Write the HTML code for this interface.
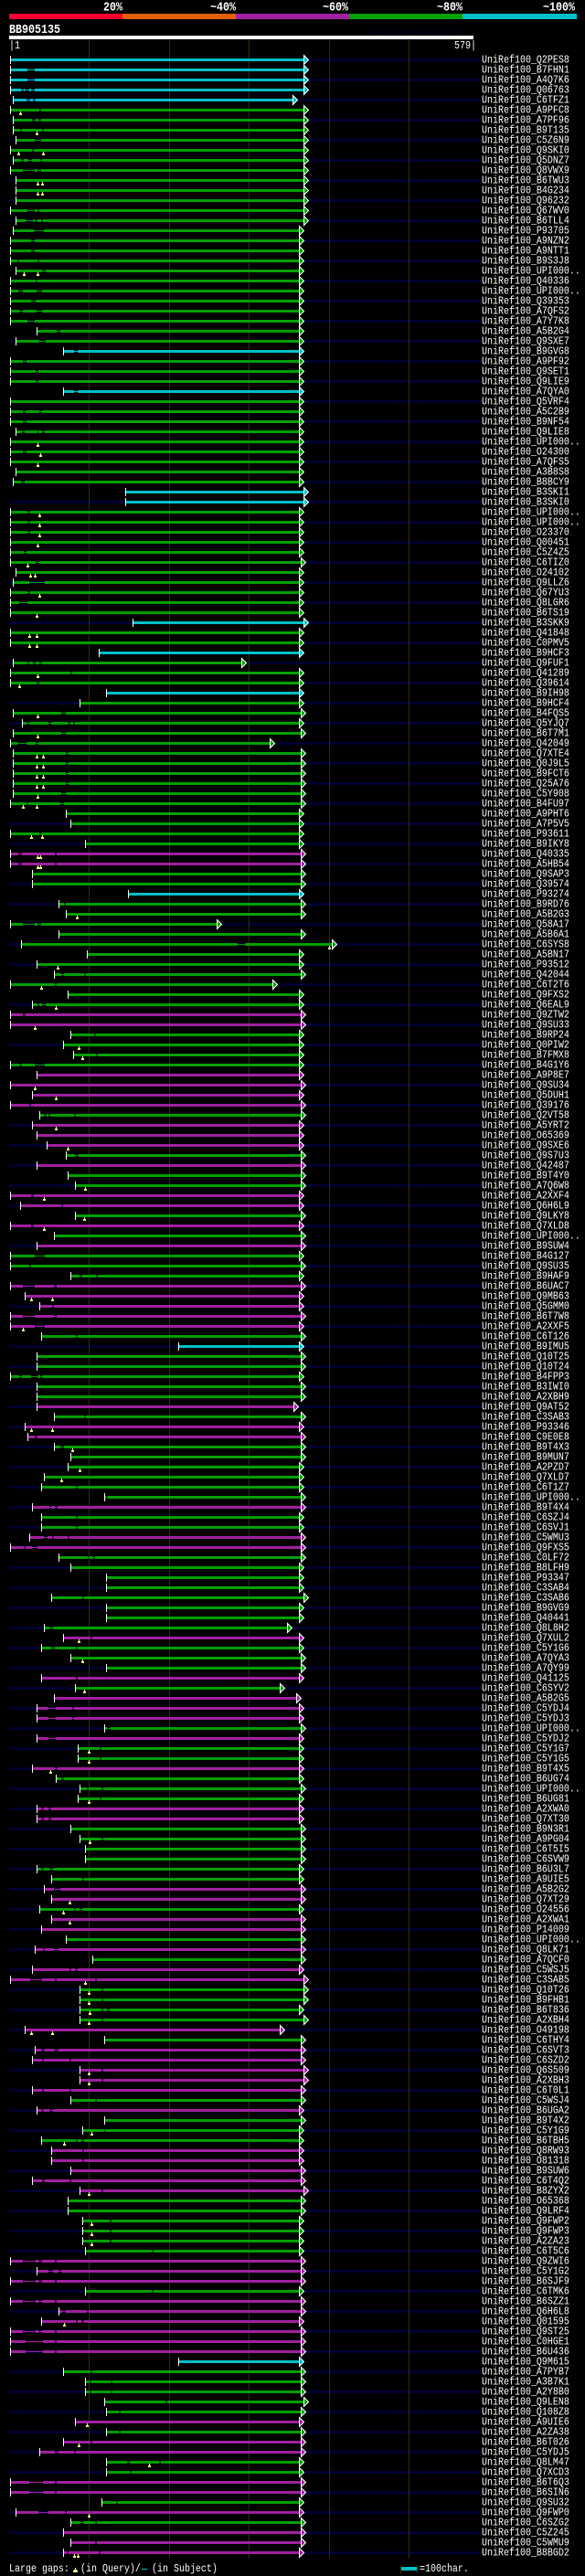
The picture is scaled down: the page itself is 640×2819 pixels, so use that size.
<!DOCTYPE html>
<html><head><meta charset="utf-8"><title>AlignView</title>
<style>
html,body{margin:0;padding:0;background:#000}
svg{display:block;shape-rendering:crispEdges;font-family:"Liberation Mono",monospace}
text{fill:#fff;font-size:12px}
.c{color:#00c0c8}.g{color:#00a000}.m{color:#a020a0}
.c path,.g path,.m path{stroke:currentColor;stroke-width:3;fill:none}
.c path.t,.g path.t,.m path.t{stroke-width:1}
.c text,.g text,.m text{transform:translate(527px,3px) scale(.8333,1)}
.h text{font-size:14px;font-weight:bold}
</style></head><body>
<svg xmlns="http://www.w3.org/2000/svg" width="640" height="2819" viewBox="0 0 640 2819">
<defs>
<pattern id="dk" x="0" y="64" width="640" height="22" patternUnits="userSpaceOnUse"><rect width="640" height="3" fill="#000030"/></pattern>
<rect id="s" x="0" y="-4.5" width="1" height="9" fill="#fff"/>
<path id="a" d="M.5-5L5.5 0 .5 5Z" fill="currentColor" stroke="#fff" stroke-width="1"/>
<g id="y" fill="#ffff80"><rect x="0" y="1.5" width="1" height="2"/><rect x="-1" y="3.5" width="3" height="2"/></g>
</defs>
<rect width="640" height="2819" fill="#000"/>
<g class="h" transform="scale(.8333 1)">
<text x="135.6" y="11.5">20%</text><text x="276" y="11.5">~40%</text><text x="423.6" y="11.5">~60%</text><text x="573.6" y="11.5">~80%</text><text x="712.8" y="11.5">~100%</text>
<text x="12" y="36">BB905135</text>
</g>
<rect x="10" y="15" width="124" height="6" fill="#ff0030"/>
<rect x="134" y="15" width="124" height="6" fill="#e06000"/>
<rect x="258" y="15" width="124" height="6" fill="#a020a0"/>
<rect x="382" y="15" width="124" height="6" fill="#00a000"/>
<rect x="506" y="15" width="125" height="6" fill="#00c0c8"/>
<text x="402" y="37.5" style="font-size:8.33px;fill:#000030">AlignView.pm Beta rel.7</text>
<rect x="10" y="39" width="508" height="4" fill="#fff"/>
<g transform="scale(.8333 1)"><text x="12" y="53">|1</text><text x="596.4" y="53">579|</text></g>
<rect x="10" y="64" width="517" height="2733" fill="url(#dk)"/>
<path d="M97.5 44V2800M185.5 44V2800M272.5 44V2800M360.5 44V2800M447.5 44V2800" stroke="#303000" stroke-width="1"/>

<g class="c" transform="translate(0 65.5)"><path d="M11 0H332"/><use href="#s" x="11"/><use href="#a" x="332"/><text>UniRef100_Q2PES8</text></g>
<g class="c" transform="translate(0 76.5)"><path class="t" d="M11 0H332"/><path d="M11 0H30M38 0H332"/><use href="#s" x="11"/><use href="#a" x="332"/><text>UniRef100_B7FHN1</text></g>
<g class="c" transform="translate(0 87.5)"><path class="t" d="M11 0H332"/><path d="M11 0H30M38 0H332"/><use href="#s" x="11"/><use href="#a" x="332"/><text>UniRef100_A4Q7K6</text></g>
<g class="c" transform="translate(0 98.5)"><path class="t" d="M11 0H332"/><path d="M11 0H23M26 0H27M32 0H34M38 0H332"/><use href="#s" x="11"/><use href="#a" x="332"/><text>UniRef100_Q06763</text></g>
<g class="c" transform="translate(0 109.5)"><path class="t" d="M14 0H320"/><path d="M14 0H29M33 0H36M39 0H320"/><use href="#s" x="14"/><use href="#a" x="320"/><text>UniRef100_C6TFZ1</text></g>
<g class="g" transform="translate(0 120.5)"><path class="t" d="M11 0H332"/><path d="M11 0H43M45 0H332"/><use href="#s" x="11"/><use href="#a" x="332"/><use href="#y" x="22"/><text>UniRef100_A9PFC8</text></g>
<g class="g" transform="translate(0 131.5)"><path class="t" d="M14 0H332"/><path d="M14 0H35M39 0H42M45 0H332"/><use href="#s" x="14"/><use href="#a" x="332"/><text>UniRef100_A7PF96</text></g>
<g class="g" transform="translate(0 142.5)"><path class="t" d="M14 0H332"/><path d="M14 0H22M24 0H46M48 0H332"/><use href="#s" x="14"/><use href="#a" x="332"/><use href="#y" x="40"/><text>UniRef100_B9T135</text></g>
<g class="g" transform="translate(0 153.5)"><path class="t" d="M17 0H332"/><path d="M17 0H38M45 0H332"/><use href="#s" x="17"/><use href="#a" x="332"/><text>UniRef100_C5Z6N9</text></g>
<g class="g" transform="translate(0 164.5)"><path class="t" d="M11 0H332"/><path d="M11 0H35M37 0H332"/><use href="#s" x="11"/><use href="#a" x="332"/><use href="#y" x="20"/><use href="#y" x="47"/><text>UniRef100_Q9SKI0</text></g>
<g class="g" transform="translate(0 175.5)"><path class="t" d="M14 0H332"/><path d="M14 0H23M26 0H31M35 0H44M46 0H332"/><use href="#s" x="14"/><use href="#a" x="332"/><text>UniRef100_Q5DNZ7</text></g>
<g class="g" transform="translate(0 186.5)"><path class="t" d="M11 0H332"/><path d="M11 0H25M38 0H41M45 0H332"/><use href="#s" x="11"/><use href="#a" x="332"/><text>UniRef100_Q8VWX9</text></g>
<g class="g" transform="translate(0 197.5)"><path d="M17 0H332"/><use href="#s" x="17"/><use href="#a" x="332"/><use href="#y" x="41"/><use href="#y" x="46"/><text>UniRef100_B6TWU3</text></g>
<g class="g" transform="translate(0 208.5)"><path d="M17 0H332"/><use href="#s" x="17"/><use href="#a" x="332"/><use href="#y" x="41"/><use href="#y" x="46"/><text>UniRef100_B4G234</text></g>
<g class="g" transform="translate(0 219.5)"><path d="M17 0H332"/><use href="#s" x="17"/><use href="#a" x="332"/><text>UniRef100_Q96232</text></g>
<g class="g" transform="translate(0 230.5)"><path class="t" d="M11 0H332"/><path d="M11 0H30M38 0H41M43 0H332"/><use href="#s" x="11"/><use href="#a" x="332"/><text>UniRef100_Q67WV0</text></g>
<g class="g" transform="translate(0 241.5)"><path class="t" d="M17 0H332"/><path d="M17 0H28M36 0H38M41 0H45M47 0H332"/><use href="#s" x="17"/><use href="#a" x="332"/><text>UniRef100_B6TLL4</text></g>
<g class="g" transform="translate(0 252.5)"><path class="t" d="M14 0H327"/><path d="M14 0H37M48 0H327"/><use href="#s" x="14"/><use href="#a" x="327"/><text>UniRef100_P93705</text></g>
<g class="g" transform="translate(0 263.5)"><path class="t" d="M11 0H327"/><path d="M11 0H34M38 0H327"/><use href="#s" x="11"/><use href="#a" x="327"/><text>UniRef100_A9NZN2</text></g>
<g class="g" transform="translate(0 274.5)"><path class="t" d="M11 0H327"/><path d="M11 0H34M38 0H327"/><use href="#s" x="11"/><use href="#a" x="327"/><text>UniRef100_A9NTT1</text></g>
<g class="g" transform="translate(0 285.5)"><path class="t" d="M11 0H327"/><path d="M11 0H19M21 0H41M43 0H327"/><use href="#s" x="11"/><use href="#a" x="327"/><text>UniRef100_B9S3J8</text></g>
<g class="g" transform="translate(0 296.5)"><path class="t" d="M17 0H327"/><path d="M17 0H46M50 0H327"/><use href="#s" x="17"/><use href="#a" x="327"/><use href="#y" x="26"/><use href="#y" x="41"/><text>UniRef100_UPI000..</text></g>
<g class="g" transform="translate(0 307.5)"><path class="t" d="M11 0H327"/><path d="M11 0H39M41 0H327"/><use href="#s" x="11"/><use href="#a" x="327"/><text>UniRef100_Q40336</text></g>
<g class="g" transform="translate(0 318.5)"><path class="t" d="M11 0H327"/><path d="M11 0H20M25 0H40M46 0H327"/><use href="#s" x="11"/><use href="#a" x="327"/><text>UniRef100_UPI000..</text></g>
<g class="g" transform="translate(0 329.5)"><path class="t" d="M11 0H327"/><path d="M11 0H34M39 0H327"/><use href="#s" x="11"/><use href="#a" x="327"/><text>UniRef100_Q39353</text></g>
<g class="g" transform="translate(0 340.5)"><path class="t" d="M11 0H327"/><path d="M11 0H21M25 0H40M46 0H327"/><use href="#s" x="11"/><use href="#a" x="327"/><text>UniRef100_A7QFS2</text></g>
<g class="g" transform="translate(0 351.5)"><path class="t" d="M11 0H327"/><path d="M11 0H30M38 0H327"/><use href="#s" x="11"/><use href="#a" x="327"/><text>UniRef100_A7Y7K8</text></g>
<g class="g" transform="translate(0 362.5)"><path class="t" d="M40 0H327"/><path d="M40 0H62M66 0H327"/><use href="#s" x="40"/><use href="#a" x="327"/><text>UniRef100_A5B2G4</text></g>
<g class="g" transform="translate(0 373.5)"><path class="t" d="M17 0H327"/><path d="M17 0H43M50 0H327"/><use href="#s" x="17"/><use href="#a" x="327"/><text>UniRef100_Q9SXE7</text></g>
<g class="c" transform="translate(0 384.5)"><path class="t" d="M69 0H327"/><path d="M69 0H81M85 0H327"/><use href="#s" x="69"/><use href="#a" x="327"/><text>UniRef100_B9GVG8</text></g>
<g class="g" transform="translate(0 395.5)"><path class="t" d="M11 0H327"/><path d="M11 0H25M29 0H327"/><use href="#s" x="11"/><use href="#a" x="327"/><text>UniRef100_A9PF92</text></g>
<g class="g" transform="translate(0 406.5)"><path class="t" d="M11 0H327"/><path d="M11 0H39M42 0H327"/><use href="#s" x="11"/><use href="#a" x="327"/><text>UniRef100_Q9SET1</text></g>
<g class="g" transform="translate(0 417.5)"><path class="t" d="M11 0H327"/><path d="M11 0H39M42 0H327"/><use href="#s" x="11"/><use href="#a" x="327"/><text>UniRef100_Q9LIE9</text></g>
<g class="c" transform="translate(0 428.5)"><path class="t" d="M69 0H327"/><path d="M69 0H81M85 0H327"/><use href="#s" x="69"/><use href="#a" x="327"/><text>UniRef100_A7QYA0</text></g>
<g class="g" transform="translate(0 439.5)"><path d="M11 0H327"/><use href="#s" x="11"/><use href="#a" x="327"/><text>UniRef100_Q5VRF4</text></g>
<g class="g" transform="translate(0 450.5)"><path class="t" d="M11 0H327"/><path d="M11 0H25M28 0H43M46 0H327"/><use href="#s" x="11"/><use href="#a" x="327"/><text>UniRef100_A5C2B9</text></g>
<g class="g" transform="translate(0 461.5)"><path class="t" d="M11 0H327"/><path d="M11 0H25M29 0H327"/><use href="#s" x="11"/><use href="#a" x="327"/><text>UniRef100_B9NF54</text></g>
<g class="g" transform="translate(0 472.5)"><path class="t" d="M17 0H327"/><path d="M17 0H24M27 0H41M42 0H46M49 0H327"/><use href="#s" x="17"/><use href="#a" x="327"/><text>UniRef100_Q9LIE8</text></g>
<g class="g" transform="translate(0 483.5)"><path d="M11 0H327"/><use href="#s" x="11"/><use href="#a" x="327"/><use href="#y" x="41"/><text>UniRef100_UPI000..</text></g>
<g class="g" transform="translate(0 494.5)"><path class="t" d="M11 0H327"/><path d="M11 0H25M29 0H327"/><use href="#s" x="11"/><use href="#a" x="327"/><use href="#y" x="44"/><text>UniRef100_O24300</text></g>
<g class="g" transform="translate(0 505.5)"><path d="M11 0H327"/><use href="#s" x="11"/><use href="#a" x="327"/><use href="#y" x="41"/><text>UniRef100_A7QFS5</text></g>
<g class="g" transform="translate(0 516.5)"><path d="M17 0H327"/><use href="#s" x="17"/><use href="#a" x="327"/><text>UniRef100_A3B8S8</text></g>
<g class="g" transform="translate(0 527.5)"><path class="t" d="M14 0H327"/><path d="M14 0H23M27 0H327"/><use href="#s" x="14"/><use href="#a" x="327"/><text>UniRef100_B8BCY9</text></g>
<g class="c" transform="translate(0 538.5)"><path d="M137 0H332"/><use href="#s" x="137"/><use href="#a" x="332"/><text>UniRef100_B3SKI1</text></g>
<g class="c" transform="translate(0 549.5)"><path d="M137 0H332"/><use href="#s" x="137"/><use href="#a" x="332"/><text>UniRef100_B3SKI0</text></g>
<g class="g" transform="translate(0 560.5)"><path class="t" d="M11 0H327"/><path d="M11 0H30M33 0H327"/><use href="#s" x="11"/><use href="#a" x="327"/><use href="#y" x="43"/><text>UniRef100_UPI000..</text></g>
<g class="g" transform="translate(0 571.5)"><path class="t" d="M11 0H327"/><path d="M11 0H30M33 0H327"/><use href="#s" x="11"/><use href="#a" x="327"/><use href="#y" x="43"/><text>UniRef100_UPI000..</text></g>
<g class="g" transform="translate(0 582.5)"><path class="t" d="M11 0H327"/><path d="M11 0H30M33 0H327"/><use href="#s" x="11"/><use href="#a" x="327"/><use href="#y" x="43"/><text>UniRef100_O23370</text></g>
<g class="g" transform="translate(0 593.5)"><path d="M11 0H327"/><use href="#s" x="11"/><use href="#a" x="327"/><use href="#y" x="41"/><text>UniRef100_Q00451</text></g>
<g class="g" transform="translate(0 604.5)"><path class="t" d="M11 0H327"/><path d="M11 0H26M29 0H327"/><use href="#s" x="11"/><use href="#a" x="327"/><text>UniRef100_C5Z4Z5</text></g>
<g class="g" transform="translate(0 615.5)"><path class="t" d="M11 0H329"/><path d="M11 0H39M43 0H329"/><use href="#s" x="11"/><use href="#a" x="329"/><use href="#y" x="30"/><text>UniRef100_C6TIZ0</text></g>
<g class="g" transform="translate(0 626.5)"><path d="M17 0H327"/><use href="#s" x="17"/><use href="#a" x="327"/><use href="#y" x="33"/><use href="#y" x="38"/><text>UniRef100_O24102</text></g>
<g class="g" transform="translate(0 637.5)"><path class="t" d="M14 0H327"/><path d="M14 0H32M49 0H327"/><use href="#s" x="14"/><use href="#a" x="327"/><text>UniRef100_Q9LLZ6</text></g>
<g class="g" transform="translate(0 648.5)"><path class="t" d="M11 0H327"/><path d="M11 0H30M33 0H327"/><use href="#s" x="11"/><use href="#a" x="327"/><use href="#y" x="43"/><text>UniRef100_Q67YU3</text></g>
<g class="g" transform="translate(0 659.5)"><path class="t" d="M11 0H327"/><path d="M11 0H21M30 0H327"/><use href="#s" x="11"/><use href="#a" x="327"/><text>UniRef100_Q8LGR6</text></g>
<g class="g" transform="translate(0 670.5)"><path d="M11 0H327"/><use href="#s" x="11"/><use href="#a" x="327"/><use href="#y" x="40"/><text>UniRef100_B6TS19</text></g>
<g class="c" transform="translate(0 681.5)"><path d="M145 0H332"/><use href="#s" x="145"/><use href="#a" x="332"/><text>UniRef100_B3SKK9</text></g>
<g class="g" transform="translate(0 692.5)"><path d="M11 0H327"/><use href="#s" x="11"/><use href="#a" x="327"/><use href="#y" x="32"/><use href="#y" x="40"/><text>UniRef100_Q41848</text></g>
<g class="g" transform="translate(0 703.5)"><path d="M11 0H327"/><use href="#s" x="11"/><use href="#a" x="327"/><use href="#y" x="32"/><use href="#y" x="40"/><text>UniRef100_C0PMV5</text></g>
<g class="c" transform="translate(0 714.5)"><path d="M108 0H327"/><use href="#s" x="108"/><use href="#a" x="327"/><text>UniRef100_B9HCF3</text></g>
<g class="g" transform="translate(0 725.5)"><path class="t" d="M14 0H264"/><path d="M14 0H30M32 0H36M39 0H43M46 0H264"/><use href="#s" x="14"/><use href="#a" x="264"/><text>UniRef100_Q9FUF1</text></g>
<g class="g" transform="translate(0 736.5)"><path class="t" d="M11 0H327"/><path d="M11 0H77M79 0H327"/><use href="#s" x="11"/><use href="#a" x="327"/><use href="#y" x="41"/><text>UniRef100_Q41289</text></g>
<g class="g" transform="translate(0 747.5)"><path class="t" d="M11 0H327"/><path d="M11 0H40M43 0H327"/><use href="#s" x="11"/><use href="#a" x="327"/><use href="#y" x="21"/><text>UniRef100_Q39614</text></g>
<g class="c" transform="translate(0 758.5)"><path d="M116 0H327"/><use href="#s" x="116"/><use href="#a" x="327"/><text>UniRef100_B9IH98</text></g>
<g class="g" transform="translate(0 769.5)"><path d="M87 0H327"/><use href="#s" x="87"/><use href="#a" x="327"/><text>UniRef100_B9HCF4</text></g>
<g class="g" transform="translate(0 780.5)"><path class="t" d="M14 0H329"/><path d="M14 0H67M72 0H329"/><use href="#s" x="14"/><use href="#a" x="329"/><use href="#y" x="41"/><text>UniRef100_B4FQS5</text></g>
<g class="g" transform="translate(0 791.5)"><path class="t" d="M24 0H327"/><path d="M24 0H29M32 0H53M56 0H74M77 0H80M82 0H327"/><use href="#s" x="24"/><use href="#a" x="327"/><text>UniRef100_Q5YJQ7</text></g>
<g class="g" transform="translate(0 802.5)"><path class="t" d="M14 0H329"/><path d="M14 0H67M72 0H329"/><use href="#s" x="14"/><use href="#a" x="329"/><use href="#y" x="41"/><text>UniRef100_B6T7M1</text></g>
<g class="g" transform="translate(0 813.5)"><path class="t" d="M11 0H295"/><path d="M11 0H19M29 0H39M42 0H295"/><use href="#s" x="11"/><use href="#a" x="295"/><text>UniRef100_Q42049</text></g>
<g class="g" transform="translate(0 824.5)"><path class="t" d="M14 0H329"/><path d="M14 0H72M75 0H329"/><use href="#s" x="14"/><use href="#a" x="329"/><use href="#y" x="40"/><use href="#y" x="47"/><text>UniRef100_Q7XTE4</text></g>
<g class="g" transform="translate(0 835.5)"><path class="t" d="M14 0H329"/><path d="M14 0H72M75 0H329"/><use href="#s" x="14"/><use href="#a" x="329"/><use href="#y" x="40"/><use href="#y" x="47"/><text>UniRef100_Q0J9L5</text></g>
<g class="g" transform="translate(0 846.5)"><path class="t" d="M14 0H329"/><path d="M14 0H72M75 0H329"/><use href="#s" x="14"/><use href="#a" x="329"/><use href="#y" x="40"/><use href="#y" x="47"/><text>UniRef100_B9FCT6</text></g>
<g class="g" transform="translate(0 857.5)"><path class="t" d="M14 0H329"/><path d="M14 0H72M75 0H329"/><use href="#s" x="14"/><use href="#a" x="329"/><use href="#y" x="40"/><use href="#y" x="47"/><text>UniRef100_Q25A76</text></g>
<g class="g" transform="translate(0 868.5)"><path class="t" d="M14 0H329"/><path d="M14 0H67M72 0H329"/><use href="#s" x="14"/><use href="#a" x="329"/><use href="#y" x="41"/><text>UniRef100_C5Y908</text></g>
<g class="g" transform="translate(0 879.5)"><path class="t" d="M11 0H329"/><path d="M11 0H29M31 0H66M70 0H329"/><use href="#s" x="11"/><use href="#a" x="329"/><use href="#y" x="25"/><use href="#y" x="40"/><text>UniRef100_B4FU97</text></g>
<g class="g" transform="translate(0 890.5)"><path d="M72 0H327"/><use href="#s" x="72"/><use href="#a" x="327"/><text>UniRef100_A9PHT6</text></g>
<g class="g" transform="translate(0 901.5)"><path d="M77 0H327"/><use href="#s" x="77"/><use href="#a" x="327"/><text>UniRef100_A7P5V5</text></g>
<g class="g" transform="translate(0 912.5)"><path class="t" d="M11 0H327"/><path d="M11 0H43M45 0H327"/><use href="#s" x="11"/><use href="#a" x="327"/><use href="#y" x="34"/><use href="#y" x="46"/><text>UniRef100_P93611</text></g>
<g class="g" transform="translate(0 923.5)"><path d="M93 0H327"/><use href="#s" x="93"/><use href="#a" x="327"/><text>UniRef100_B9IKY8</text></g>
<g class="m" transform="translate(0 934.5)"><path class="t" d="M11 0H329"/><path d="M11 0H20M24 0H60M62 0H329"/><use href="#s" x="11"/><use href="#a" x="329"/><use href="#y" x="41"/><use href="#y" x="44"/><text>UniRef100_Q40335</text></g>
<g class="m" transform="translate(0 945.5)"><path class="t" d="M11 0H329"/><path d="M11 0H20M24 0H60M62 0H329"/><use href="#s" x="11"/><use href="#a" x="329"/><use href="#y" x="41"/><use href="#y" x="44"/><text>UniRef100_A5HB54</text></g>
<g class="g" transform="translate(0 956.5)"><path d="M35 0H329"/><use href="#s" x="35"/><use href="#a" x="329"/><text>UniRef100_Q9SAP3</text></g>
<g class="g" transform="translate(0 967.5)"><path d="M35 0H329"/><use href="#s" x="35"/><use href="#a" x="329"/><text>UniRef100_Q39574</text></g>
<g class="c" transform="translate(0 978.5)"><path d="M140 0H327"/><use href="#s" x="140"/><use href="#a" x="327"/><text>UniRef100_P93274</text></g>
<g class="g" transform="translate(0 989.5)"><path class="t" d="M64 0H329"/><path d="M64 0H70M72 0H329"/><use href="#s" x="64"/><use href="#a" x="329"/><text>UniRef100_B9RD76</text></g>
<g class="g" transform="translate(0 1000.5)"><path d="M72 0H329"/><use href="#s" x="72"/><use href="#a" x="329"/><use href="#y" x="84"/><text>UniRef100_A5B2G3</text></g>
<g class="g" transform="translate(0 1011.5)"><path class="t" d="M11 0H237"/><path d="M11 0H25M38 0H41M45 0H237"/><use href="#s" x="11"/><use href="#a" x="237"/><text>UniRef100_Q58A17</text></g>
<g class="g" transform="translate(0 1022.5)"><path d="M64 0H329"/><use href="#s" x="64"/><use href="#a" x="329"/><text>UniRef100_A5B6A1</text></g>
<g class="g" transform="translate(0 1033.5)"><path class="t" d="M23 0H363"/><path d="M23 0H260M268 0H363"/><use href="#s" x="23"/><use href="#a" x="363"/><use href="#y" x="360"/><text>UniRef100_C6SYS8</text></g>
<g class="g" transform="translate(0 1044.5)"><path d="M95 0H327"/><use href="#s" x="95"/><use href="#a" x="327"/><text>UniRef100_A5BN17</text></g>
<g class="g" transform="translate(0 1055.5)"><path d="M40 0H327"/><use href="#s" x="40"/><use href="#a" x="327"/><use href="#y" x="63"/><text>UniRef100_P93512</text></g>
<g class="g" transform="translate(0 1066.5)"><path class="t" d="M59 0H329"/><path d="M59 0H67M70 0H92M94 0H329"/><use href="#s" x="59"/><use href="#a" x="329"/><text>UniRef100_Q42044</text></g>
<g class="g" transform="translate(0 1077.5)"><path class="t" d="M11 0H298"/><path d="M11 0H60M62 0H298"/><use href="#s" x="11"/><use href="#a" x="298"/><use href="#y" x="45"/><text>UniRef100_C6T2T6</text></g>
<g class="g" transform="translate(0 1088.5)"><path d="M74 0H327"/><use href="#s" x="74"/><use href="#a" x="327"/><text>UniRef100_Q9FXS2</text></g>
<g class="g" transform="translate(0 1099.5)"><path class="t" d="M35 0H327"/><path d="M35 0H41M43 0H46M50 0H327"/><use href="#s" x="35"/><use href="#a" x="327"/><use href="#y" x="61"/><text>UniRef100_Q6EAL9</text></g>
<g class="m" transform="translate(0 1110.5)"><path class="t" d="M11 0H329"/><path d="M11 0H25M28 0H329"/><use href="#s" x="11"/><use href="#a" x="329"/><text>UniRef100_Q9ZTW2</text></g>
<g class="m" transform="translate(0 1121.5)"><path d="M11 0H329"/><use href="#s" x="11"/><use href="#a" x="329"/><use href="#y" x="38"/><text>UniRef100_Q9SU33</text></g>
<g class="g" transform="translate(0 1132.5)"><path class="t" d="M77 0H327"/><path d="M77 0H103M105 0H327"/><use href="#s" x="77"/><use href="#a" x="327"/><text>UniRef100_B9RP24</text></g>
<g class="g" transform="translate(0 1143.5)"><path d="M69 0H327"/><use href="#s" x="69"/><use href="#a" x="327"/><use href="#y" x="86"/><text>UniRef100_Q0PIW2</text></g>
<g class="g" transform="translate(0 1154.5)"><path class="t" d="M80 0H327"/><path d="M80 0H105M107 0H327"/><use href="#s" x="80"/><use href="#a" x="327"/><use href="#y" x="90"/><text>UniRef100_B7FMX8</text></g>
<g class="g" transform="translate(0 1165.5)"><path class="t" d="M11 0H327"/><path d="M11 0H21M24 0H38M49 0H327"/><use href="#s" x="11"/><use href="#a" x="327"/><text>UniRef100_B4G1Y6</text></g>
<g class="m" transform="translate(0 1176.5)"><path d="M40 0H327"/><use href="#s" x="40"/><use href="#a" x="327"/><text>UniRef100_A9P8E7</text></g>
<g class="m" transform="translate(0 1187.5)"><path d="M11 0H329"/><use href="#s" x="11"/><use href="#a" x="329"/><use href="#y" x="38"/><text>UniRef100_Q9SU34</text></g>
<g class="m" transform="translate(0 1198.5)"><path d="M35 0H327"/><use href="#s" x="35"/><use href="#a" x="327"/><use href="#y" x="61"/><text>UniRef100_Q5DUH1</text></g>
<g class="m" transform="translate(0 1209.5)"><path class="t" d="M11 0H329"/><path d="M11 0H32M34 0H329"/><use href="#s" x="11"/><use href="#a" x="329"/><text>UniRef100_Q39176</text></g>
<g class="g" transform="translate(0 1220.5)"><path class="t" d="M43 0H329"/><path d="M43 0H48M51 0H53M55 0H81M83 0H329"/><use href="#s" x="43"/><use href="#a" x="329"/><text>UniRef100_Q2VT58</text></g>
<g class="m" transform="translate(0 1231.5)"><path d="M35 0H327"/><use href="#s" x="35"/><use href="#a" x="327"/><use href="#y" x="61"/><text>UniRef100_A5YRT2</text></g>
<g class="m" transform="translate(0 1242.5)"><path d="M40 0H327"/><use href="#s" x="40"/><use href="#a" x="327"/><text>UniRef100_O65369</text></g>
<g class="m" transform="translate(0 1253.5)"><path d="M51 0H327"/><use href="#s" x="51"/><use href="#a" x="327"/><use href="#y" x="74"/><text>UniRef100_Q9SXE6</text></g>
<g class="g" transform="translate(0 1264.5)"><path class="t" d="M72 0H329"/><path d="M72 0H82M86 0H329"/><use href="#s" x="72"/><use href="#a" x="329"/><text>UniRef100_Q9S7U3</text></g>
<g class="m" transform="translate(0 1275.5)"><path d="M40 0H329"/><use href="#s" x="40"/><use href="#a" x="329"/><text>UniRef100_Q42487</text></g>
<g class="g" transform="translate(0 1286.5)"><path d="M74 0H329"/><use href="#s" x="74"/><use href="#a" x="329"/><text>UniRef100_B9T4Y0</text></g>
<g class="g" transform="translate(0 1297.5)"><path d="M82 0H329"/><use href="#s" x="82"/><use href="#a" x="329"/><use href="#y" x="93"/><text>UniRef100_A7Q6W8</text></g>
<g class="m" transform="translate(0 1308.5)"><path class="t" d="M11 0H327"/><path d="M11 0H34M37 0H327"/><use href="#s" x="11"/><use href="#a" x="327"/><use href="#y" x="48"/><text>UniRef100_A2XXF4</text></g>
<g class="m" transform="translate(0 1319.5)"><path class="t" d="M22 0H327"/><path d="M22 0H67M69 0H327"/><use href="#s" x="22"/><use href="#a" x="327"/><text>UniRef100_Q6H6L9</text></g>
<g class="g" transform="translate(0 1330.5)"><path d="M82 0H329"/><use href="#s" x="82"/><use href="#a" x="329"/><use href="#y" x="92"/><text>UniRef100_Q9LKY8</text></g>
<g class="m" transform="translate(0 1341.5)"><path class="t" d="M11 0H327"/><path d="M11 0H34M37 0H327"/><use href="#s" x="11"/><use href="#a" x="327"/><use href="#y" x="48"/><text>UniRef100_Q7XLD8</text></g>
<g class="g" transform="translate(0 1352.5)"><path d="M59 0H329"/><use href="#s" x="59"/><use href="#a" x="329"/><text>UniRef100_UPI000..</text></g>
<g class="m" transform="translate(0 1363.5)"><path d="M40 0H329"/><use href="#s" x="40"/><use href="#a" x="329"/><text>UniRef100_B9SUW4</text></g>
<g class="g" transform="translate(0 1374.5)"><path class="t" d="M11 0H327"/><path d="M11 0H38M49 0H327"/><use href="#s" x="11"/><use href="#a" x="327"/><text>UniRef100_B4G127</text></g>
<g class="g" transform="translate(0 1385.5)"><path class="t" d="M11 0H329"/><path d="M11 0H32M34 0H329"/><use href="#s" x="11"/><use href="#a" x="329"/><text>UniRef100_Q9SU35</text></g>
<g class="g" transform="translate(0 1396.5)"><path class="t" d="M77 0H327"/><path d="M77 0H87M90 0H105M107 0H327"/><use href="#s" x="77"/><use href="#a" x="327"/><text>UniRef100_B9HAF9</text></g>
<g class="m" transform="translate(0 1407.5)"><path class="t" d="M11 0H329"/><path d="M11 0H25M38 0H59M62 0H329"/><use href="#s" x="11"/><use href="#a" x="329"/><text>UniRef100_B6UAC7</text></g>
<g class="m" transform="translate(0 1418.5)"><path d="M27 0H327"/><use href="#s" x="27"/><use href="#a" x="327"/><use href="#y" x="34"/><use href="#y" x="57"/><text>UniRef100_Q9MB63</text></g>
<g class="m" transform="translate(0 1429.5)"><path class="t" d="M43 0H327"/><path d="M43 0H57M59 0H327"/><use href="#s" x="43"/><use href="#a" x="327"/><text>UniRef100_Q5GMM0</text></g>
<g class="m" transform="translate(0 1440.5)"><path class="t" d="M11 0H329"/><path d="M11 0H25M38 0H59M62 0H329"/><use href="#s" x="11"/><use href="#a" x="329"/><text>UniRef100_B6T7W8</text></g>
<g class="m" transform="translate(0 1451.5)"><path class="t" d="M11 0H327"/><path d="M11 0H38M49 0H327"/><use href="#s" x="11"/><use href="#a" x="327"/><use href="#y" x="25"/><text>UniRef100_A2XXF5</text></g>
<g class="g" transform="translate(0 1462.5)"><path class="t" d="M45 0H329"/><path d="M45 0H83M85 0H329"/><use href="#s" x="45"/><use href="#a" x="329"/><text>UniRef100_C6T126</text></g>
<g class="c" transform="translate(0 1473.5)"><path d="M195 0H327"/><use href="#s" x="195"/><use href="#a" x="327"/><text>UniRef100_B9IMU5</text></g>
<g class="g" transform="translate(0 1484.5)"><path d="M40 0H329"/><use href="#s" x="40"/><use href="#a" x="329"/><text>UniRef100_Q10T25</text></g>
<g class="g" transform="translate(0 1495.5)"><path d="M40 0H329"/><use href="#s" x="40"/><use href="#a" x="329"/><text>UniRef100_Q10T24</text></g>
<g class="g" transform="translate(0 1506.5)"><path class="t" d="M11 0H327"/><path d="M11 0H21M24 0H34M41 0H44M46 0H327"/><use href="#s" x="11"/><use href="#a" x="327"/><text>UniRef100_B4FPP3</text></g>
<g class="g" transform="translate(0 1517.5)"><path d="M40 0H329"/><use href="#s" x="40"/><use href="#a" x="329"/><text>UniRef100_B3IWI0</text></g>
<g class="g" transform="translate(0 1528.5)"><path d="M40 0H329"/><use href="#s" x="40"/><use href="#a" x="329"/><text>UniRef100_A2XBH9</text></g>
<g class="m" transform="translate(0 1539.5)"><path d="M40 0H321"/><use href="#s" x="40"/><use href="#a" x="321"/><text>UniRef100_Q9AT52</text></g>
<g class="g" transform="translate(0 1550.5)"><path class="t" d="M59 0H329"/><path d="M59 0H92M94 0H329"/><use href="#s" x="59"/><use href="#a" x="329"/><text>UniRef100_C3SAB3</text></g>
<g class="m" transform="translate(0 1561.5)"><path d="M27 0H327"/><use href="#s" x="27"/><use href="#a" x="327"/><use href="#y" x="34"/><use href="#y" x="57"/><text>UniRef100_P93346</text></g>
<g class="m" transform="translate(0 1572.5)"><path class="t" d="M30 0H329"/><path d="M30 0H38M41 0H329"/><use href="#s" x="30"/><use href="#a" x="329"/><text>UniRef100_C9E0E8</text></g>
<g class="g" transform="translate(0 1583.5)"><path class="t" d="M59 0H329"/><path d="M59 0H66M70 0H329"/><use href="#s" x="59"/><use href="#a" x="329"/><use href="#y" x="79"/><text>UniRef100_B9T4X3</text></g>
<g class="g" transform="translate(0 1594.5)"><path d="M77 0H329"/><use href="#s" x="77"/><use href="#a" x="329"/><text>UniRef100_B9MUN7</text></g>
<g class="g" transform="translate(0 1605.5)"><path d="M74 0H327"/><use href="#s" x="74"/><use href="#a" x="327"/><use href="#y" x="87"/><text>UniRef100_A2PZD7</text></g>
<g class="g" transform="translate(0 1616.5)"><path d="M48 0H327"/><use href="#s" x="48"/><use href="#a" x="327"/><use href="#y" x="67"/><text>UniRef100_Q7XLD7</text></g>
<g class="g" transform="translate(0 1627.5)"><path class="t" d="M45 0H327"/><path d="M45 0H83M85 0H327"/><use href="#s" x="45"/><use href="#a" x="327"/><text>UniRef100_C6T1Z7</text></g>
<g class="g" transform="translate(0 1638.5)"><path class="t" d="M114 0H329"/><path d="M114 0H116M118 0H329"/><use href="#s" x="114"/><use href="#a" x="329"/><text>UniRef100_UPI000..</text></g>
<g class="m" transform="translate(0 1649.5)"><path class="t" d="M35 0H329"/><path d="M35 0H54M56 0H60M63 0H329"/><use href="#s" x="35"/><use href="#a" x="329"/><text>UniRef100_B9T4X4</text></g>
<g class="g" transform="translate(0 1660.5)"><path class="t" d="M45 0H327"/><path d="M45 0H83M85 0H327"/><use href="#s" x="45"/><use href="#a" x="327"/><text>UniRef100_C6SZJ4</text></g>
<g class="g" transform="translate(0 1671.5)"><path class="t" d="M45 0H327"/><path d="M45 0H83M85 0H327"/><use href="#s" x="45"/><use href="#a" x="327"/><text>UniRef100_C6SVJ1</text></g>
<g class="m" transform="translate(0 1682.5)"><path class="t" d="M32 0H329"/><path d="M32 0H48M52 0H57M59 0H74M76 0H329"/><use href="#s" x="32"/><use href="#a" x="329"/><text>UniRef100_C5WMU3</text></g>
<g class="m" transform="translate(0 1693.5)"><path class="t" d="M11 0H329"/><path d="M11 0H26M28 0H35M41 0H329"/><use href="#s" x="11"/><use href="#a" x="329"/><text>UniRef100_Q9FXS5</text></g>
<g class="g" transform="translate(0 1704.5)"><path class="t" d="M64 0H329"/><path d="M64 0H96M98 0H102M104 0H329"/><use href="#s" x="64"/><use href="#a" x="329"/><text>UniRef100_C0LF72</text></g>
<g class="g" transform="translate(0 1715.5)"><path d="M77 0H327"/><use href="#s" x="77"/><use href="#a" x="327"/><text>UniRef100_B8LFH9</text></g>
<g class="g" transform="translate(0 1726.5)"><path d="M116 0H327"/><use href="#s" x="116"/><use href="#a" x="327"/><text>UniRef100_P93347</text></g>
<g class="g" transform="translate(0 1737.5)"><path d="M116 0H327"/><use href="#s" x="116"/><use href="#a" x="327"/><text>UniRef100_C3SAB4</text></g>
<g class="g" transform="translate(0 1748.5)"><path class="t" d="M56 0H332"/><path d="M56 0H90M92 0H332"/><use href="#s" x="56"/><use href="#a" x="332"/><text>UniRef100_C3SAB6</text></g>
<g class="g" transform="translate(0 1759.5)"><path d="M116 0H327"/><use href="#s" x="116"/><use href="#a" x="327"/><text>UniRef100_B9GVG9</text></g>
<g class="g" transform="translate(0 1770.5)"><path d="M116 0H327"/><use href="#s" x="116"/><use href="#a" x="327"/><text>UniRef100_Q40441</text></g>
<g class="g" transform="translate(0 1781.5)"><path class="t" d="M48 0H314"/><path d="M48 0H54M58 0H314"/><use href="#s" x="48"/><use href="#a" x="314"/><text>UniRef100_Q8L8H2</text></g>
<g class="m" transform="translate(0 1792.5)"><path class="t" d="M69 0H327"/><path d="M69 0H99M101 0H327"/><use href="#s" x="69"/><use href="#a" x="327"/><use href="#y" x="86"/><text>UniRef100_Q7XUL2</text></g>
<g class="g" transform="translate(0 1803.5)"><path class="t" d="M45 0H327"/><path d="M45 0H56M60 0H83M85 0H327"/><use href="#s" x="45"/><use href="#a" x="327"/><text>UniRef100_C5Y1G6</text></g>
<g class="g" transform="translate(0 1814.5)"><path d="M77 0H329"/><use href="#s" x="77"/><use href="#a" x="329"/><use href="#y" x="90"/><text>UniRef100_A7QYA3</text></g>
<g class="g" transform="translate(0 1825.5)"><path d="M116 0H329"/><use href="#s" x="116"/><use href="#a" x="329"/><text>UniRef100_A7QY99</text></g>
<g class="m" transform="translate(0 1836.5)"><path class="t" d="M45 0H327"/><path d="M45 0H83M85 0H327"/><use href="#s" x="45"/><use href="#a" x="327"/><text>UniRef100_Q41125</text></g>
<g class="g" transform="translate(0 1847.5)"><path d="M82 0H306"/><use href="#s" x="82"/><use href="#a" x="306"/><use href="#y" x="92"/><text>UniRef100_C6SYV2</text></g>
<g class="m" transform="translate(0 1858.5)"><path d="M59 0H324"/><use href="#s" x="59"/><use href="#a" x="324"/><text>UniRef100_A5B2G5</text></g>
<g class="m" transform="translate(0 1869.5)"><path class="t" d="M40 0H327"/><path d="M40 0H53M61 0H79M81 0H327"/><use href="#s" x="40"/><use href="#a" x="327"/><text>UniRef100_C5YDJ4</text></g>
<g class="m" transform="translate(0 1880.5)"><path class="t" d="M40 0H327"/><path d="M40 0H53M61 0H79M81 0H327"/><use href="#s" x="40"/><use href="#a" x="327"/><text>UniRef100_C5YDJ3</text></g>
<g class="g" transform="translate(0 1891.5)"><path class="t" d="M114 0H329"/><path d="M114 0H117M121 0H329"/><use href="#s" x="114"/><use href="#a" x="329"/><text>UniRef100_UPI000..</text></g>
<g class="m" transform="translate(0 1902.5)"><path class="t" d="M40 0H327"/><path d="M40 0H53M61 0H327"/><use href="#s" x="40"/><use href="#a" x="327"/><text>UniRef100_C5YDJ2</text></g>
<g class="g" transform="translate(0 1913.5)"><path class="t" d="M85 0H327"/><path d="M85 0H109M111 0H327"/><use href="#s" x="85"/><use href="#a" x="327"/><use href="#y" x="97"/><text>UniRef100_C5Y1G7</text></g>
<g class="g" transform="translate(0 1924.5)"><path class="t" d="M85 0H327"/><path d="M85 0H109M111 0H327"/><use href="#s" x="85"/><use href="#a" x="327"/><use href="#y" x="97"/><text>UniRef100_C5Y1G5</text></g>
<g class="m" transform="translate(0 1935.5)"><path class="t" d="M35 0H327"/><path d="M35 0H60M63 0H327"/><use href="#s" x="35"/><use href="#a" x="327"/><use href="#y" x="55"/><text>UniRef100_B9T4X5</text></g>
<g class="g" transform="translate(0 1946.5)"><path class="t" d="M61 0H327"/><path d="M61 0H67M70 0H327"/><use href="#s" x="61"/><use href="#a" x="327"/><text>UniRef100_B6UG74</text></g>
<g class="g" transform="translate(0 1957.5)"><path class="t" d="M87 0H329"/><path d="M87 0H95M97 0H111M113 0H329"/><use href="#s" x="87"/><use href="#a" x="329"/><text>UniRef100_UPI000..</text></g>
<g class="g" transform="translate(0 1968.5)"><path class="t" d="M85 0H327"/><path d="M85 0H109M111 0H327"/><use href="#s" x="85"/><use href="#a" x="327"/><use href="#y" x="97"/><text>UniRef100_B6UG81</text></g>
<g class="m" transform="translate(0 1979.5)"><path class="t" d="M40 0H327"/><path d="M40 0H45M48 0H53M56 0H327"/><use href="#s" x="40"/><use href="#a" x="327"/><text>UniRef100_A2XWA0</text></g>
<g class="m" transform="translate(0 1990.5)"><path class="t" d="M40 0H327"/><path d="M40 0H45M48 0H53M56 0H327"/><use href="#s" x="40"/><use href="#a" x="327"/><text>UniRef100_Q7XT30</text></g>
<g class="g" transform="translate(0 2001.5)"><path d="M77 0H329"/><use href="#s" x="77"/><use href="#a" x="329"/><text>UniRef100_B9N3R1</text></g>
<g class="g" transform="translate(0 2012.5)"><path class="t" d="M87 0H329"/><path d="M87 0H111M113 0H329"/><use href="#s" x="87"/><use href="#a" x="329"/><use href="#y" x="98"/><text>UniRef100_A9PG04</text></g>
<g class="g" transform="translate(0 2023.5)"><path d="M93 0H329"/><use href="#s" x="93"/><use href="#a" x="329"/><text>UniRef100_C6T5I5</text></g>
<g class="g" transform="translate(0 2034.5)"><path d="M93 0H329"/><use href="#s" x="93"/><use href="#a" x="329"/><text>UniRef100_C6SVW9</text></g>
<g class="g" transform="translate(0 2045.5)"><path class="t" d="M40 0H327"/><path d="M40 0H45M48 0H54M58 0H327"/><use href="#s" x="40"/><use href="#a" x="327"/><text>UniRef100_B6U3L7</text></g>
<g class="g" transform="translate(0 2056.5)"><path class="t" d="M56 0H327"/><path d="M56 0H90M92 0H327"/><use href="#s" x="56"/><use href="#a" x="327"/><text>UniRef100_A9UIE5</text></g>
<g class="m" transform="translate(0 2067.5)"><path class="t" d="M48 0H329"/><path d="M48 0H59M66 0H329"/><use href="#s" x="48"/><use href="#a" x="329"/><text>UniRef100_A5B2G2</text></g>
<g class="m" transform="translate(0 2078.5)"><path d="M56 0H329"/><use href="#s" x="56"/><use href="#a" x="329"/><use href="#y" x="76"/><text>UniRef100_Q7XT29</text></g>
<g class="g" transform="translate(0 2089.5)"><path class="t" d="M43 0H327"/><path d="M43 0H81M83 0H87M90 0H327"/><use href="#s" x="43"/><use href="#a" x="327"/><use href="#y" x="69"/><text>UniRef100_O24556</text></g>
<g class="m" transform="translate(0 2100.5)"><path d="M56 0H329"/><use href="#s" x="56"/><use href="#a" x="329"/><use href="#y" x="76"/><text>UniRef100_A2XWA1</text></g>
<g class="m" transform="translate(0 2111.5)"><path d="M45 0H329"/><use href="#s" x="45"/><use href="#a" x="329"/><text>UniRef100_P14009</text></g>
<g class="g" transform="translate(0 2122.5)"><path d="M72 0H329"/><use href="#s" x="72"/><use href="#a" x="329"/><text>UniRef100_UPI000..</text></g>
<g class="m" transform="translate(0 2133.5)"><path class="t" d="M38 0H329"/><path d="M38 0H47M49 0H59M64 0H329"/><use href="#s" x="38"/><use href="#a" x="329"/><text>UniRef100_Q8LK71</text></g>
<g class="g" transform="translate(0 2144.5)"><path d="M101 0H329"/><use href="#s" x="101"/><use href="#a" x="329"/><text>UniRef100_A7QCF0</text></g>
<g class="m" transform="translate(0 2155.5)"><path class="t" d="M35 0H327"/><path d="M35 0H76M78 0H82M85 0H327"/><use href="#s" x="35"/><use href="#a" x="327"/><text>UniRef100_C5WSJ5</text></g>
<g class="m" transform="translate(0 2166.5)"><path class="t" d="M11 0H332"/><path d="M11 0H33M46 0H60M62 0H104M106 0H332"/><use href="#s" x="11"/><use href="#a" x="332"/><use href="#y" x="93"/><text>UniRef100_C3SAB5</text></g>
<g class="g" transform="translate(0 2177.5)"><path class="t" d="M87 0H332"/><path d="M87 0H111M113 0H332"/><use href="#s" x="87"/><use href="#a" x="332"/><use href="#y" x="97"/><text>UniRef100_Q10T26</text></g>
<g class="g" transform="translate(0 2188.5)"><path class="t" d="M87 0H332"/><path d="M87 0H111M113 0H332"/><use href="#s" x="87"/><use href="#a" x="332"/><use href="#y" x="97"/><text>UniRef100_B9FHB1</text></g>
<g class="g" transform="translate(0 2199.5)"><path class="t" d="M87 0H327"/><path d="M87 0H111M113 0H117M120 0H327"/><use href="#s" x="87"/><use href="#a" x="327"/><use href="#y" x="98"/><text>UniRef100_B6T836</text></g>
<g class="g" transform="translate(0 2210.5)"><path class="t" d="M87 0H332"/><path d="M87 0H111M113 0H332"/><use href="#s" x="87"/><use href="#a" x="332"/><use href="#y" x="97"/><text>UniRef100_A2XBH4</text></g>
<g class="m" transform="translate(0 2221.5)"><path d="M27 0H306"/><use href="#s" x="27"/><use href="#a" x="306"/><use href="#y" x="34"/><use href="#y" x="57"/><text>UniRef100_O49198</text></g>
<g class="g" transform="translate(0 2232.5)"><path d="M114 0H329"/><use href="#s" x="114"/><use href="#a" x="329"/><text>UniRef100_C6THY4</text></g>
<g class="m" transform="translate(0 2243.5)"><path class="t" d="M38 0H329"/><path d="M38 0H45M49 0H59M64 0H329"/><use href="#s" x="38"/><use href="#a" x="329"/><text>UniRef100_C6SVT3</text></g>
<g class="m" transform="translate(0 2254.5)"><path class="t" d="M35 0H329"/><path d="M35 0H46M48 0H76M78 0H329"/><use href="#s" x="35"/><use href="#a" x="329"/><text>UniRef100_C6SZD2</text></g>
<g class="m" transform="translate(0 2265.5)"><path class="t" d="M87 0H332"/><path d="M87 0H111M113 0H332"/><use href="#s" x="87"/><use href="#a" x="332"/><use href="#y" x="97"/><text>UniRef100_Q6S509</text></g>
<g class="m" transform="translate(0 2276.5)"><path class="t" d="M87 0H332"/><path d="M87 0H111M113 0H332"/><use href="#s" x="87"/><use href="#a" x="332"/><use href="#y" x="97"/><text>UniRef100_A2XBH3</text></g>
<g class="m" transform="translate(0 2287.5)"><path class="t" d="M35 0H329"/><path d="M35 0H46M48 0H76M78 0H329"/><use href="#s" x="35"/><use href="#a" x="329"/><text>UniRef100_C6T0L1</text></g>
<g class="g" transform="translate(0 2298.5)"><path class="t" d="M77 0H329"/><path d="M77 0H104M106 0H329"/><use href="#s" x="77"/><use href="#a" x="329"/><text>UniRef100_C5WSJ4</text></g>
<g class="m" transform="translate(0 2309.5)"><path class="t" d="M40 0H327"/><path d="M40 0H45M48 0H54M58 0H327"/><use href="#s" x="40"/><use href="#a" x="327"/><text>UniRef100_B6UGA2</text></g>
<g class="g" transform="translate(0 2320.5)"><path d="M114 0H329"/><use href="#s" x="114"/><use href="#a" x="329"/><text>UniRef100_B9T4X2</text></g>
<g class="g" transform="translate(0 2331.5)"><path class="t" d="M90 0H327"/><path d="M90 0H114M115 0H327"/><use href="#s" x="90"/><use href="#a" x="327"/><use href="#y" x="100"/><text>UniRef100_C5Y1G9</text></g>
<g class="g" transform="translate(0 2342.5)"><path class="t" d="M45 0H327"/><path d="M45 0H83M85 0H89M92 0H327"/><use href="#s" x="45"/><use href="#a" x="327"/><use href="#y" x="70"/><text>UniRef100_B6TBH5</text></g>
<g class="m" transform="translate(0 2353.5)"><path class="t" d="M56 0H327"/><path d="M56 0H90M92 0H327"/><use href="#s" x="56"/><use href="#a" x="327"/><text>UniRef100_Q8RW93</text></g>
<g class="m" transform="translate(0 2364.5)"><path class="t" d="M56 0H327"/><path d="M56 0H90M92 0H327"/><use href="#s" x="56"/><use href="#a" x="327"/><text>UniRef100_O81318</text></g>
<g class="m" transform="translate(0 2375.5)"><path d="M77 0H329"/><use href="#s" x="77"/><use href="#a" x="329"/><text>UniRef100_B9SUW6</text></g>
<g class="m" transform="translate(0 2386.5)"><path class="t" d="M35 0H329"/><path d="M35 0H46M49 0H76M78 0H329"/><use href="#s" x="35"/><use href="#a" x="329"/><text>UniRef100_C6T4Q2</text></g>
<g class="m" transform="translate(0 2397.5)"><path class="t" d="M87 0H332"/><path d="M87 0H111M113 0H332"/><use href="#s" x="87"/><use href="#a" x="332"/><use href="#y" x="97"/><text>UniRef100_B8ZYX2</text></g>
<g class="g" transform="translate(0 2408.5)"><path d="M74 0H329"/><use href="#s" x="74"/><use href="#a" x="329"/><text>UniRef100_O65368</text></g>
<g class="g" transform="translate(0 2419.5)"><path d="M74 0H329"/><use href="#s" x="74"/><use href="#a" x="329"/><text>UniRef100_Q9LRF4</text></g>
<g class="g" transform="translate(0 2430.5)"><path class="t" d="M90 0H327"/><path d="M90 0H120M122 0H327"/><use href="#s" x="90"/><use href="#a" x="327"/><use href="#y" x="100"/><text>UniRef100_Q9FWP2</text></g>
<g class="g" transform="translate(0 2441.5)"><path class="t" d="M90 0H327"/><path d="M90 0H120M122 0H327"/><use href="#s" x="90"/><use href="#a" x="327"/><use href="#y" x="100"/><text>UniRef100_Q9FWP3</text></g>
<g class="g" transform="translate(0 2452.5)"><path class="t" d="M90 0H327"/><path d="M90 0H120M122 0H327"/><use href="#s" x="90"/><use href="#a" x="327"/><use href="#y" x="100"/><text>UniRef100_A2ZA23</text></g>
<g class="g" transform="translate(0 2463.5)"><path class="t" d="M93 0H327"/><path d="M93 0H166M168 0H327"/><use href="#s" x="93"/><use href="#a" x="327"/><text>UniRef100_C6T5C6</text></g>
<g class="m" transform="translate(0 2474.5)"><path class="t" d="M11 0H329"/><path d="M11 0H25M39 0H42M46 0H60M62 0H329"/><use href="#s" x="11"/><use href="#a" x="329"/><text>UniRef100_Q9ZWI6</text></g>
<g class="m" transform="translate(0 2485.5)"><path class="t" d="M40 0H329"/><path d="M40 0H53M58 0H64M67 0H329"/><use href="#s" x="40"/><use href="#a" x="329"/><text>UniRef100_C5Y1G2</text></g>
<g class="m" transform="translate(0 2496.5)"><path class="t" d="M11 0H329"/><path d="M11 0H25M39 0H42M46 0H60M62 0H329"/><use href="#s" x="11"/><use href="#a" x="329"/><text>UniRef100_B6SJF9</text></g>
<g class="g" transform="translate(0 2507.5)"><path class="t" d="M93 0H327"/><path d="M93 0H166M168 0H327"/><use href="#s" x="93"/><use href="#a" x="327"/><text>UniRef100_C6TMK6</text></g>
<g class="m" transform="translate(0 2518.5)"><path class="t" d="M11 0H329"/><path d="M11 0H25M39 0H42M46 0H60M62 0H329"/><use href="#s" x="11"/><use href="#a" x="329"/><text>UniRef100_B6SZZ1</text></g>
<g class="m" transform="translate(0 2529.5)"><path class="t" d="M64 0H329"/><path d="M64 0H68M72 0H95M97 0H329"/><use href="#s" x="64"/><use href="#a" x="329"/><text>UniRef100_Q6H6L8</text></g>
<g class="m" transform="translate(0 2540.5)"><path class="t" d="M45 0H327"/><path d="M45 0H83M85 0H89M92 0H327"/><use href="#s" x="45"/><use href="#a" x="327"/><use href="#y" x="70"/><text>UniRef100_Q01595</text></g>
<g class="m" transform="translate(0 2551.5)"><path class="t" d="M11 0H329"/><path d="M11 0H25M39 0H42M46 0H60M62 0H329"/><use href="#s" x="11"/><use href="#a" x="329"/><text>UniRef100_Q9ST25</text></g>
<g class="m" transform="translate(0 2562.5)"><path class="t" d="M11 0H329"/><path d="M11 0H28M47 0H60M62 0H329"/><use href="#s" x="11"/><use href="#a" x="329"/><text>UniRef100_C0HGE1</text></g>
<g class="m" transform="translate(0 2573.5)"><path class="t" d="M11 0H329"/><path d="M11 0H28M47 0H60M62 0H329"/><use href="#s" x="11"/><use href="#a" x="329"/><text>UniRef100_B6U436</text></g>
<g class="c" transform="translate(0 2584.5)"><path d="M195 0H327"/><use href="#s" x="195"/><use href="#a" x="327"/><text>UniRef100_Q9M615</text></g>
<g class="g" transform="translate(0 2595.5)"><path class="t" d="M69 0H329"/><path d="M69 0H99M101 0H329"/><use href="#s" x="69"/><use href="#a" x="329"/><text>UniRef100_A7PYB7</text></g>
<g class="g" transform="translate(0 2606.5)"><path class="t" d="M93 0H329"/><path d="M93 0H98M100 0H121M123 0H329"/><use href="#s" x="93"/><use href="#a" x="329"/><text>UniRef100_A3B7K1</text></g>
<g class="g" transform="translate(0 2617.5)"><path class="t" d="M93 0H329"/><path d="M93 0H98M100 0H121M123 0H329"/><use href="#s" x="93"/><use href="#a" x="329"/><text>UniRef100_A2Y8B0</text></g>
<g class="g" transform="translate(0 2628.5)"><path class="t" d="M114 0H332"/><path d="M114 0H181M183 0H332"/><use href="#s" x="114"/><use href="#a" x="332"/><text>UniRef100_Q9LEN8</text></g>
<g class="g" transform="translate(0 2639.5)"><path class="t" d="M116 0H329"/><path d="M116 0H130M132 0H329"/><use href="#s" x="116"/><use href="#a" x="329"/><text>UniRef100_Q108Z8</text></g>
<g class="m" transform="translate(0 2650.5)"><path d="M82 0H327"/><use href="#s" x="82"/><use href="#a" x="327"/><use href="#y" x="95"/><text>UniRef100_A9UIE6</text></g>
<g class="g" transform="translate(0 2661.5)"><path class="t" d="M116 0H329"/><path d="M116 0H130M132 0H329"/><use href="#s" x="116"/><use href="#a" x="329"/><text>UniRef100_A2ZA38</text></g>
<g class="m" transform="translate(0 2672.5)"><path class="t" d="M69 0H329"/><path d="M69 0H99M101 0H329"/><use href="#s" x="69"/><use href="#a" x="329"/><use href="#y" x="86"/><text>UniRef100_B6T026</text></g>
<g class="m" transform="translate(0 2683.5)"><path class="t" d="M43 0H329"/><path d="M43 0H60M64 0H81M83 0H329"/><use href="#s" x="43"/><use href="#a" x="329"/><text>UniRef100_C5YDJ5</text></g>
<g class="g" transform="translate(0 2694.5)"><path class="t" d="M116 0H327"/><path d="M116 0H139M142 0H174M176 0H327"/><use href="#s" x="116"/><use href="#a" x="327"/><use href="#y" x="163"/><text>UniRef100_Q8LM47</text></g>
<g class="g" transform="translate(0 2705.5)"><path class="t" d="M116 0H327"/><path d="M116 0H142M144 0H327"/><use href="#s" x="116"/><use href="#a" x="327"/><text>UniRef100_Q7XCD3</text></g>
<g class="m" transform="translate(0 2716.5)"><path class="t" d="M11 0H329"/><path d="M11 0H32M47 0H60M62 0H329"/><use href="#s" x="11"/><use href="#a" x="329"/><text>UniRef100_B6T6Q3</text></g>
<g class="m" transform="translate(0 2727.5)"><path class="t" d="M11 0H329"/><path d="M11 0H32M47 0H60M62 0H329"/><use href="#s" x="11"/><use href="#a" x="329"/><text>UniRef100_B6SIN6</text></g>
<g class="g" transform="translate(0 2738.5)"><path class="t" d="M111 0H327"/><path d="M111 0H127M129 0H327"/><use href="#s" x="111"/><use href="#a" x="327"/><text>UniRef100_Q9SU32</text></g>
<g class="m" transform="translate(0 2749.5)"><path class="t" d="M17 0H327"/><path d="M17 0H42M53 0H71M73 0H327"/><use href="#s" x="17"/><use href="#a" x="327"/><use href="#y" x="97"/><text>UniRef100_Q9FWP0</text></g>
<g class="g" transform="translate(0 2760.5)"><path class="t" d="M77 0H329"/><path d="M77 0H88M91 0H104M106 0H329"/><use href="#s" x="77"/><use href="#a" x="329"/><text>UniRef100_C6SZG2</text></g>
<g class="m" transform="translate(0 2771.5)"><path d="M69 0H329"/><use href="#s" x="69"/><use href="#a" x="329"/><text>UniRef100_C5Z245</text></g>
<g class="m" transform="translate(0 2782.5)"><path class="t" d="M77 0H329"/><path d="M77 0H104M106 0H329"/><use href="#s" x="77"/><use href="#a" x="329"/><text>UniRef100_C5WMU9</text></g>
<g class="m" transform="translate(0 2793.5)"><path class="t" d="M69 0H327"/><path d="M69 0H73M75 0H108M110 0H327"/><use href="#s" x="69"/><use href="#a" x="327"/><use href="#y" x="81"/><use href="#y" x="85"/><text>UniRef100_B8BGD2</text></g>

<g transform="scale(.8333 1)">
<text x="12" y="2814">Large gaps:</text>
<text x="105.6" y="2814">(in Query)/</text>
<text x="199.2" y="2814">(in Subject)</text>
<text x="550.8" y="2814">=100char.</text>
</g>
<path d="M82 2810h1v2h-1zM81 2812h3v1h-3zM80 2813h5v2h-5z" fill="#ffff80"/>
<rect x="155" y="2811" width="6" height="1" fill="#00c0c8"/>
<rect x="438" y="2807" width="1" height="9" fill="#303000"/>
<rect x="456" y="2807" width="1" height="9" fill="#303000"/>
<rect x="439" y="2809" width="17" height="4" fill="#00c0c8"/>
</svg>
</body></html>
